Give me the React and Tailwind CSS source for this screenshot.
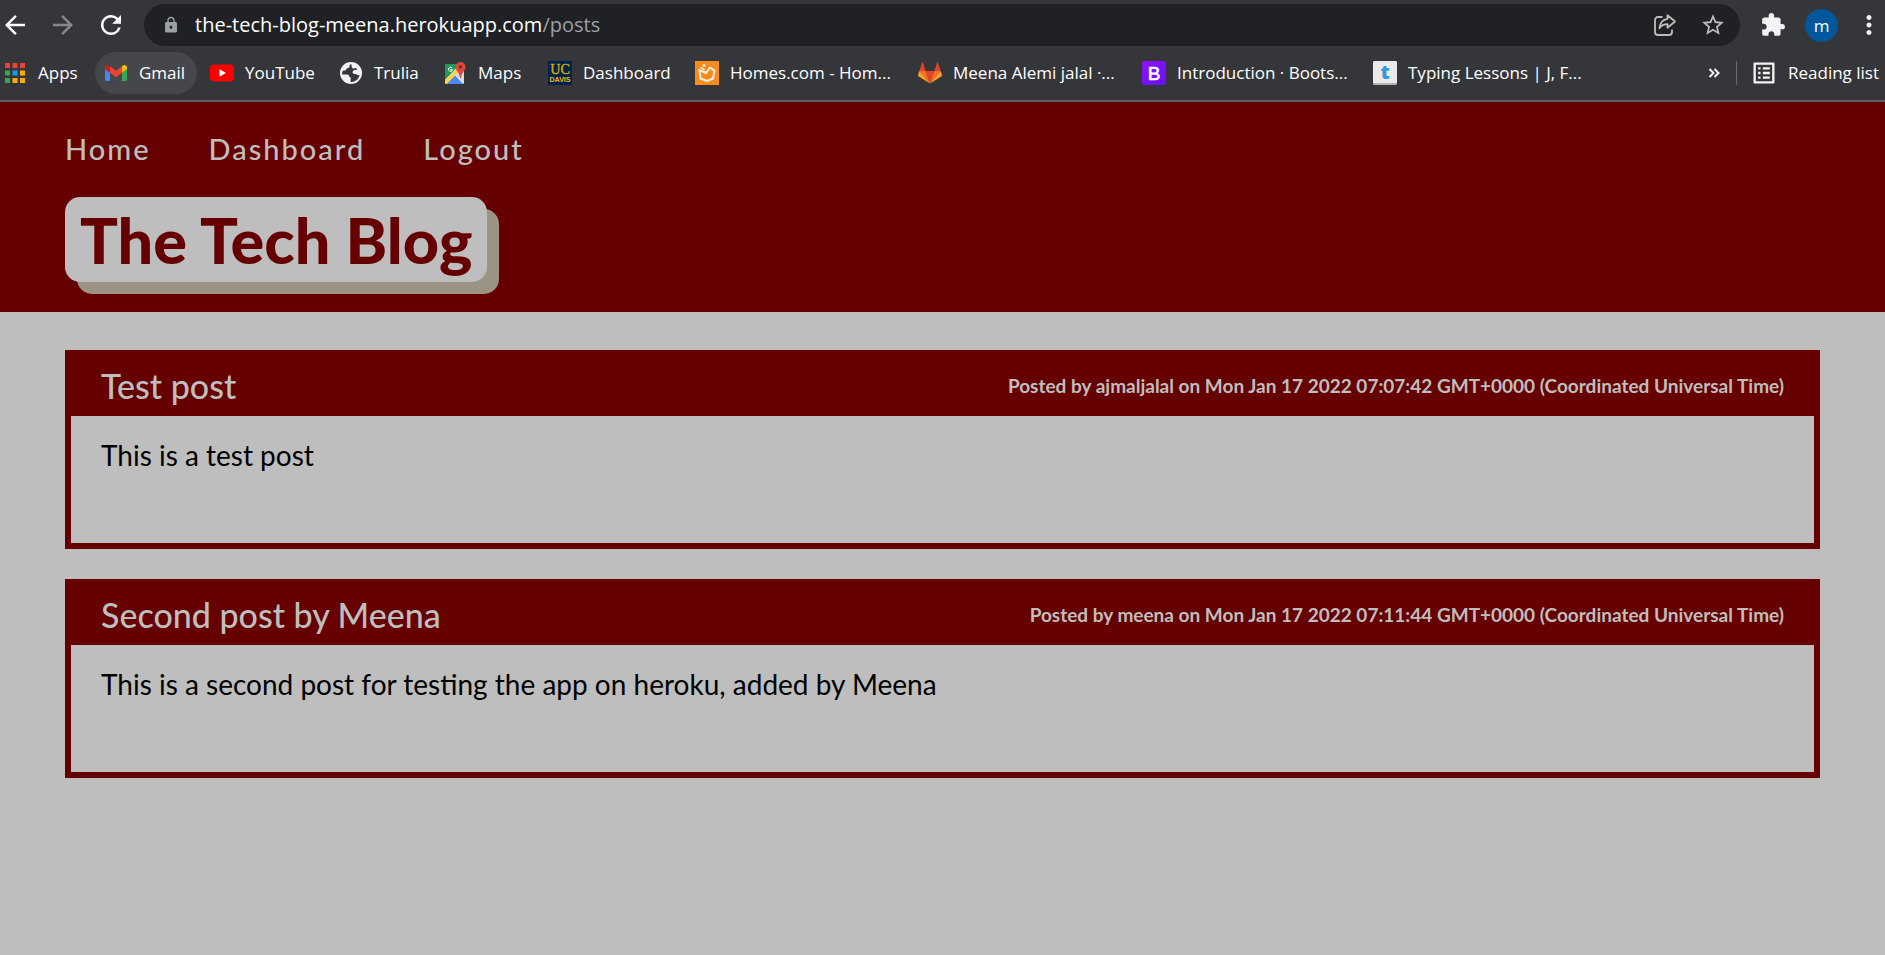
import React from "react";
import {
  MdArrowBack,
  MdArrowForward,
  MdRefresh,
  MdLock,
  MdStarBorder,
  MdExtension,
  MdMoreVert,
  MdOutlineListAlt,
} from "react-icons/md";

const APP_COLORS = [
  "#ea4335", "#ea4335", "#ea4335",
  "#34a853", "#2196f3", "#fbab00",
  "#34a853", "#fbab00", "#fbab00",
];

function AppsIcon() {
  return (
    <svg viewBox="0 0 24 24" className="size-6">
      {APP_COLORS.map((color, i) => (
        <rect key={i} x={2 + (i % 3) * 7.5} y={2 + Math.floor(i / 3) * 7.5} width="5" height="5" fill={color} />
      ))}
    </svg>
  );
}

function GmailIcon() {
  return (
    <svg viewBox="0 0 24 24" className="size-6">
      <path fill="#4285f4" d="M1 8v10.500A1.500 1.500 0 0 0 2.500 20H6v-8.500z" />
      <path fill="#34a853" d="M18 20h3.500a1.500 1.500 0 0 0 1.500-1.500V8l-5 3.500z" />
      <path fill="#fbbc04" d="M18 5.500v6.200l5-3.700V6.500c0-2.200-2.300-3.300-4-2z" />
      <path fill="#ea4335" d="M6 11.700V5.200l6 4.500 6-4.500v6.500l-6 4.500z" />
      <path fill="#c5221f" d="M1 6.500V8l5 3.700V5.200l-1-.7c-1.700-1.300-4-.2-4 2z" />
    </svg>
  );
}

function YouTubeIcon() {
  return (
    <svg viewBox="0 0 24 24" className="size-6">
      <rect x="0" y="3.500" width="24" height="17" rx="4" fill="#ff0000" />
      <path d="M9.500 8.300v7.400L16 12z" fill="#fff" />
    </svg>
  );
}

function GlobeIcon() {
  return (
    <svg viewBox="0 0 24 24" className="size-6">
      <circle cx="12" cy="12" r="11" fill="#f1f3f4" />
      <path
        fill="#35363a"
        d="M12.500 3.300c-1.800.1-2.300 1-2 2.200.3 1-.7 1.300-1.800 1.500-1.400.3-1 1.700-2.200 2.300-.9.500-2.200.3-3 .9-.4 1.100-.4 2.300-.2 3.300h4.600c1.900 0 2.300 1 2.400 2 .1 1 1.300.7 1.600 1.500.3.900-.6 1.500-.5 2.400l.6 1.600c4.300 0 7.900-2.900 8.600-7-.9.500-2 .1-2.700-.5-.8-.7-2.200-.3-3.200-.8-1.300-.6-1.400-2.200-.5-3 .8-.8 2.100-.6 3.200-.6.900-.1.600-1.200 0-1.500-1.300-.6-2.700.2-3.800-.4-1.300-.8-.9-2.500-1.100-3.900z"
      />
    </svg>
  );
}

function MapsIcon() {
  return (
    <svg viewBox="0 0 24 24" className="size-6">
      <rect x="2" y="3" width="19" height="20" rx="1.500" fill="#dfe3e6" />
      <path d="M2 4.500A1.500 1.500 0 0 1 3.500 3H17L2 19z" fill="#23965a" />
      <path d="M3.500 23 12 14.500l8 8.500z" fill="#4a89f3" />
      <path d="M2 19 15.500 5.500l2.500 3L3.500 23A1.500 1.500 0 0 1 2 21.500z" fill="#fbd04b" />
      <path d="M12 14.500 18 8.500l3 3v10z" fill="#d8dbde" />
      <path d="M9 7a2 2 0 1 0 .5 1.500H7.500" fill="none" stroke="#fff" strokeWidth="1" />
      <path d="M17.500 1a5 5 0 0 1 5 5c0 4-4 5-4.500 11h-1C16.500 11 12.500 10 12.500 6a5 5 0 0 1 5-5z" fill="#dd4b3e" />
      <circle cx="17.500" cy="6" r="1.800" fill="#8c231c" />
    </svg>
  );
}

function DavisIcon() {
  return (
    <svg viewBox="0 0 24 24" className="size-6">
      <rect width="24" height="24" fill="#02224d" />
      <text x="12" y="13" textAnchor="middle" fontSize="14" fill="#dba900" stroke="#dba900" strokeWidth="0.400" fontFamily="Liberation Serif, serif">UC</text>
      <text x="12" y="20.500" textAnchor="middle" fontSize="7" fontWeight="800" fill="#f0bb00" fontFamily="Liberation Sans, sans-serif">DAVIS</text>
    </svg>
  );
}

function HomesIcon() {
  return (
    <svg viewBox="0 0 24 24" className="size-6">
      <rect width="24" height="24" fill="#f98b1c" />
      <path
        d="M4.500 9 5.500 17.500 12 20l6-2.500 1.500-8-4.500-3-4 5.500z"
        fill="none"
        stroke="#fff4e4"
        strokeWidth="2"
        strokeLinejoin="round"
        strokeLinecap="round"
      />
      <circle cx="9" cy="4.500" r="1.400" fill="#fff4e4" />
      <path d="M6 6.500 9 8.500" stroke="#fff4e4" strokeWidth="1.500" strokeLinecap="round" />
    </svg>
  );
}

function GitLabIcon() {
  return (
    <svg viewBox="0 0 24 24" className="size-6">
      <path fill="#e24329" d="m12 22.500 4.400-12.500H7.600z" />
      <path fill="#fc6d26" d="M12 22.500 7.600 10H1.300zM12 22.500 16.400 10h6.300z" />
      <path fill="#fca326" d="M1.300 10 0 14.200c-.1.400 0 .8.400 1.100L12 22.500zM22.700 10l1.300 4.200c.1.400 0 .8-.4 1.100L12 22.500z" />
      <path fill="#e24329" d="M1.300 10h6.300L4.900 1.500c-.1-.4-.7-.4-.8 0zM22.700 10h-6.300l2.700-8.500c.1-.4.700-.4.800 0z" />
    </svg>
  );
}

function BootstrapIcon() {
  return (
    <svg viewBox="0 0 24 24" className="size-6 overflow-visible">
      <defs>
        <linearGradient id="bootstrap-fill" x1="0" y1="0" x2="1" y2="1">
          <stop offset="0" stopColor="#9013fe" />
          <stop offset="1" stopColor="#6610f2" />
        </linearGradient>
      </defs>
      <rect width="24" height="24" rx="2.500" fill="url(#bootstrap-fill)" />
      <text x="12" y="18.500" textAnchor="middle" fontSize="19" fill="#fff" stroke="#fff" strokeWidth="0.600" fontFamily="Liberation Sans, sans-serif">B</text>
    </svg>
  );
}

function TypingIcon() {
  return (
    <svg viewBox="0 0 24 24" className="size-6 overflow-visible">
      <rect width="24" height="24" rx="1.500" fill="#b4b4b4" />
      <rect width="24" height="22" rx="1.500" fill="#eaeaea" />
      <text x="12" y="17.500" textAnchor="middle" fontSize="20" fontWeight="800" fill="#3498db" fontFamily="Open Sans, sans-serif">t</text>
    </svg>
  );
}

function ShareIcon() {
  return (
    <svg viewBox="0 0 24 24" className="size-6" fill="none" stroke="#bdbdbd" strokeWidth="1.800" strokeLinejoin="round">
      <path d="M9.500 4H5a3 3 0 0 0-3 3v12a3 3 0 0 0 3 3h11a3 3 0 0 0 3-3v-2.500" />
      <path d="M14.500 2.200 22 8.500l-7.500 6.200v-3.500c-3.700 0-6 1.200-8 4C7 10 9.500 6.500 14.500 5.800z" />
    </svg>
  );
}

const BOOKMARKS = [
  { label: "Apps", Icon: AppsIcon, size: "w-[90px] pl-0.5" },
  { label: "Gmail", Icon: GmailIcon, size: "w-[102px] pl-[9px] bg-[#46474a]" },
  { label: "YouTube", Icon: YouTubeIcon, size: "w-[125px] pl-[9px]" },
  { label: "Trulia", Icon: GlobeIcon, size: "w-[100px] pl-[9px]" },
  { label: "Maps", Icon: MapsIcon, size: "w-[101px] pl-[9px]" },
  { label: "Dashboard", Icon: DavisIcon, size: "w-[143px] pl-[9px]" },
  { label: "Homes.com - Hom...", Icon: HomesIcon, size: "w-[219px] pl-[9px]" },
  { label: "Meena Alemi jalal ·...", Icon: GitLabIcon, size: "w-[220px] pl-[9px]" },
  { label: "Introduction · Boots...", Icon: BootstrapIcon, size: "w-[227px] pl-[9px]" },
  { label: "Typing Lessons | J, F...", Icon: TypingIcon, size: "w-[227px] pl-[9px]" },
];

const POSTS = [
  {
    title: "Test post",
    meta: "Posted by ajmaljalal on Mon Jan 17 2022 07:07:42 GMT+0000 (Coordinated Universal Time)",
    body: "This is a test post",
  },
  {
    title: "Second post by Meena",
    meta: "Posted by meena on Mon Jan 17 2022 07:11:44 GMT+0000 (Coordinated Universal Time)",
    body: "This is a second post for testing the app on heroku, added by Meena",
  },
];

function BrowserBar() {
  return (
    <div className="border-b-2 border-[#5f6063] bg-[#35363a] font-['Open_Sans','Noto_Sans',sans-serif] text-white">
      <div className="flex h-[50px] items-center">
        <div className="flex w-36 shrink-0 items-center gap-[18px]">
          <button type="button" aria-label="Back"><MdArrowBack className="size-[30px]" /></button>
          <button type="button" aria-label="Forward"><MdArrowForward className="size-[30px] text-[#86878a]" /></button>
          <button type="button" aria-label="Reload"><MdRefresh className="size-[30px]" /></button>
        </div>
        <div className="flex h-[42px] flex-1 items-center rounded-full bg-[#202124] pr-[14px] pl-[18px]">
          <MdLock className="mr-[15px] size-[18px] shrink-0 text-[#9aa0a6]" />
          <a href="#posts" className="flex-1 text-[20px] whitespace-nowrap">
            the-tech-blog-meena.herokuapp.com<span className="text-[#9aa0a6]">/posts</span>
          </a>
          <div className="flex items-center gap-[23px]">
            <button type="button" aria-label="Share"><ShareIcon /></button>
            <button type="button" aria-label="Bookmark this page"><MdStarBorder className="size-[26px] text-[#bdbdbd]" /></button>
          </div>
        </div>
        <div className="flex w-[145px] shrink-0 items-center pl-5">
          <button type="button" aria-label="Extensions"><MdExtension className="size-[26px] text-[#f1f3f4]" /></button>
          <button type="button" aria-label="Profile" className="ml-[19px] size-[33px] rounded-full bg-[#01579b] text-[17px] leading-none">m</button>
          <button type="button" aria-label="Menu" className="ml-4"><MdMoreVert className="size-[30px] text-[#f1f3f4]" /></button>
        </div>
      </div>
      <div className="flex h-[50px] items-start gap-1 pt-0.5 pl-px">
        {BOOKMARKS.map(({ label, Icon, size }) => (
          <a key={label} href="#bookmark" className={`flex h-[42px] shrink-0 items-center gap-[11px] rounded-full text-[17px] whitespace-nowrap ${size}`}>
            <Icon />
            {label}
          </a>
        ))}
        <div className="ml-auto flex h-[42px] shrink-0 items-center pr-[6px]">
          <button type="button" aria-label="More bookmarks" className="mr-4">
            <svg viewBox="0 0 12 12" className="size-3" fill="none" stroke="#f1f3f4" strokeWidth="2">
              <path d="m1.500 2 4 4-4 4M6.500 2l4 4-4 4" />
            </svg>
          </button>
          <span className="mr-[13px] h-6 w-px bg-[#68696c]" />
          <button type="button" className="flex items-center gap-[10px] text-[17px] whitespace-nowrap">
            <MdOutlineListAlt className="size-[28px] text-[#f1f3f4]" />
            Reading list
          </button>
        </div>
      </div>
    </div>
  );
}

function Post({ title, meta, body }) {
  return (
    <article className="border-[6px] border-[#660000]">
      <header className="flex h-[60px] items-center justify-between bg-[#660000] px-[30px] text-[#bebebe]">
        <h2 className="text-[34px] leading-[60px] font-medium">{title}</h2>
        <p className="text-[19px] font-bold">{meta}</p>
      </header>
      <p className="min-h-[127px] px-[30px] pt-[21px] text-[28px] leading-9 text-black">{body}</p>
    </article>
  );
}

export default function App() {
  return (
    <div className="min-h-screen bg-[#bebebe] font-['Gill_Sans','Gill_Sans_MT',Lato,sans-serif]">
      <BrowserBar />
      <header className="h-[210px] bg-[#660000] px-[65px] pt-[29px] text-[#bebebe]">
        <nav className="flex gap-[58px] text-[29px] leading-9 font-medium tracking-[2px]">
          <a href="#home">Home</a>
          <a href="#dashboard">Dashboard</a>
          <a href="#logout">Logout</a>
        </nav>
        <h1 className="mt-[30px] w-fit rounded-[15px] bg-[#bebebe] px-[15px] text-[63px] leading-[85px] font-black text-[#660000] shadow-[12px_12px_0_#9b9486]">
          The Tech Blog
        </h1>
      </header>
      <main id="posts" className="flex flex-col gap-[30px] px-[65px] pt-[38px]">
        {POSTS.map((post) => (
          <Post key={post.title} {...post} />
        ))}
      </main>
    </div>
  );
}
